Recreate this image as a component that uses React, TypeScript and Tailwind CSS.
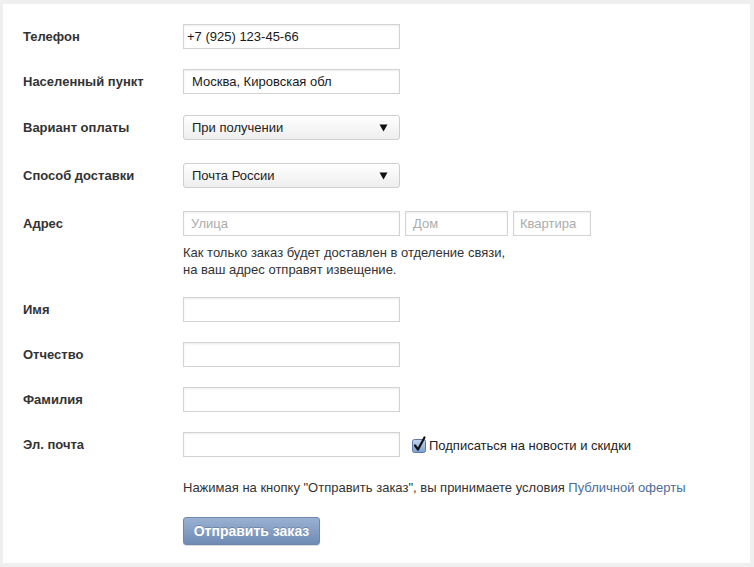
import React from "react";

const font = { fontFamily: '"Liberation Sans", Arial, Helvetica, sans-serif' };

function Label({ children }: { children: React.ReactNode }) {
  return (
    <div className="w-[160px] shrink-0 h-[25px] flex items-center text-[13px] font-bold text-[#333]">
      {children}
    </div>
  );
}

function TextInput({
  value,
  placeholder,
  w = "w-[217px]",
  pl = "pl-[8px]",
}: {
  value?: string;
  placeholder?: string;
  w?: string;
  pl?: string;
}) {
  return (
    <div
      className={`${w} h-[25px] border border-[#d3d3d3] bg-white shadow-[inset_0_1px_2px_rgba(0,0,0,0.08)] flex items-center ${pl} text-[13px]`}
    >
      {value ? (
        <span className="text-[#1a1a1a]">{value}</span>
      ) : (
        <span className="text-[#acacac]">{placeholder}</span>
      )}
    </div>
  );
}

function SelectBox({ value }: { value: string }) {
  return (
    <div className="w-[217px] h-[25px] border border-[#cfcfcf] rounded-[3px] bg-gradient-to-b from-white to-[#eeeeee] flex items-center justify-between pl-[8px] pr-[11px] text-[13px] text-[#222]">
      <span>{value}</span>
      <svg width="9" height="8" viewBox="0 0 9 8">
        <path d="M0.5 0.5 H8.5 L4.5 7.5 Z" fill="#111" />
      </svg>
    </div>
  );
}

function Checkbox() {
  return (
    <svg width="16" height="17" viewBox="0 0 16 17" className="shrink-0">
      <defs>
        <linearGradient id="cbg" x1="0" y1="0" x2="0" y2="1">
          <stop offset="0" stopColor="#c3d5ee" />
          <stop offset="1" stopColor="#7d9fd0" />
        </linearGradient>
      </defs>
      <rect x="0.5" y="3.5" width="13" height="13" rx="2" fill="url(#cbg)" stroke="#5a79a6" />
      <path d="M3 9.5 L6 13.5 L12.5 1.5" fill="none" stroke="#111" strokeWidth="2.2" strokeLinecap="round" strokeLinejoin="round" />
    </svg>
  );
}

export default function App() {
  return (
    <div className="w-[754px] h-[567px] bg-[#efefef] pt-[4px] pl-[3px] pr-[4px] pb-[4px] flex" style={font}>
      <div className="flex-1 bg-white pl-[20px] pt-[20px] flex flex-col">
        <div className="flex">
          <Label>Телефон</Label>
          <TextInput value="+7 (925) 123-45-66" pl="pl-[3px]" />
        </div>
        <div className="flex mt-[20px]">
          <Label>Населенный пункт</Label>
          <TextInput value="Москва, Кировская обл" />
        </div>
        <div className="flex mt-[21px]">
          <Label>Вариант оплаты</Label>
          <SelectBox value="При получении" />
        </div>
        <div className="flex mt-[23px]">
          <Label>Способ доставки</Label>
          <SelectBox value="Почта России" />
        </div>
        <div className="flex mt-[23px]">
          <Label>Адрес</Label>
          <div className="flex flex-col">
            <div className="flex gap-[5px]">
              <TextInput placeholder="Улица" pl="pl-[7px]" />
              <TextInput placeholder="Дом" w="w-[103px]" pl="pl-[7px]" />
              <TextInput placeholder="Квартира" w="w-[78px]" pl="pl-[6px]" />
            </div>
            <div className="mt-[8px] text-[13px] leading-[17px] text-[#333]">
              Как только заказ будет доставлен в отделение связи,
              <br />
              на ваш адрес отправят извещение.
            </div>
          </div>
        </div>
        <div className="flex mt-[19px]">
          <Label>Имя</Label>
          <TextInput />
        </div>
        <div className="flex mt-[20px]">
          <Label>Отчество</Label>
          <TextInput />
        </div>
        <div className="flex mt-[20px]">
          <Label>Фамилия</Label>
          <TextInput />
        </div>
        <div className="flex mt-[20px]">
          <Label>Эл. почта</Label>
          <TextInput />
          <div className="flex items-center ml-[12px] gap-[1px] h-[25px]">
            <Checkbox />
            <span className="text-[13px] text-[#222] mt-[2px]">Подписаться на новости и скидки</span>
          </div>
        </div>
        <div className="ml-[160px] mt-[22px] text-[13px] leading-[17px] text-[#333]">
          Нажимая на кнопку "Отправить заказ", вы принимаете условия{" "}
          <span className="text-[#4b6c9b]">Публичной оферты</span>
        </div>
        <div className="ml-[160px] mt-[21px]">
          <button className="w-[137px] h-[28px] rounded-[3px] border border-[#6c88b0] bg-gradient-to-b from-[#9ab1d2] to-[#6f8bb4] text-white text-[14px] font-bold [text-shadow:0_-1px_0_rgba(0,0,0,0.2)] shadow-[0_1px_1px_rgba(0,0,0,0.15)]">
            Отправить заказ
          </button>
        </div>
      </div>
    </div>
  );
}
